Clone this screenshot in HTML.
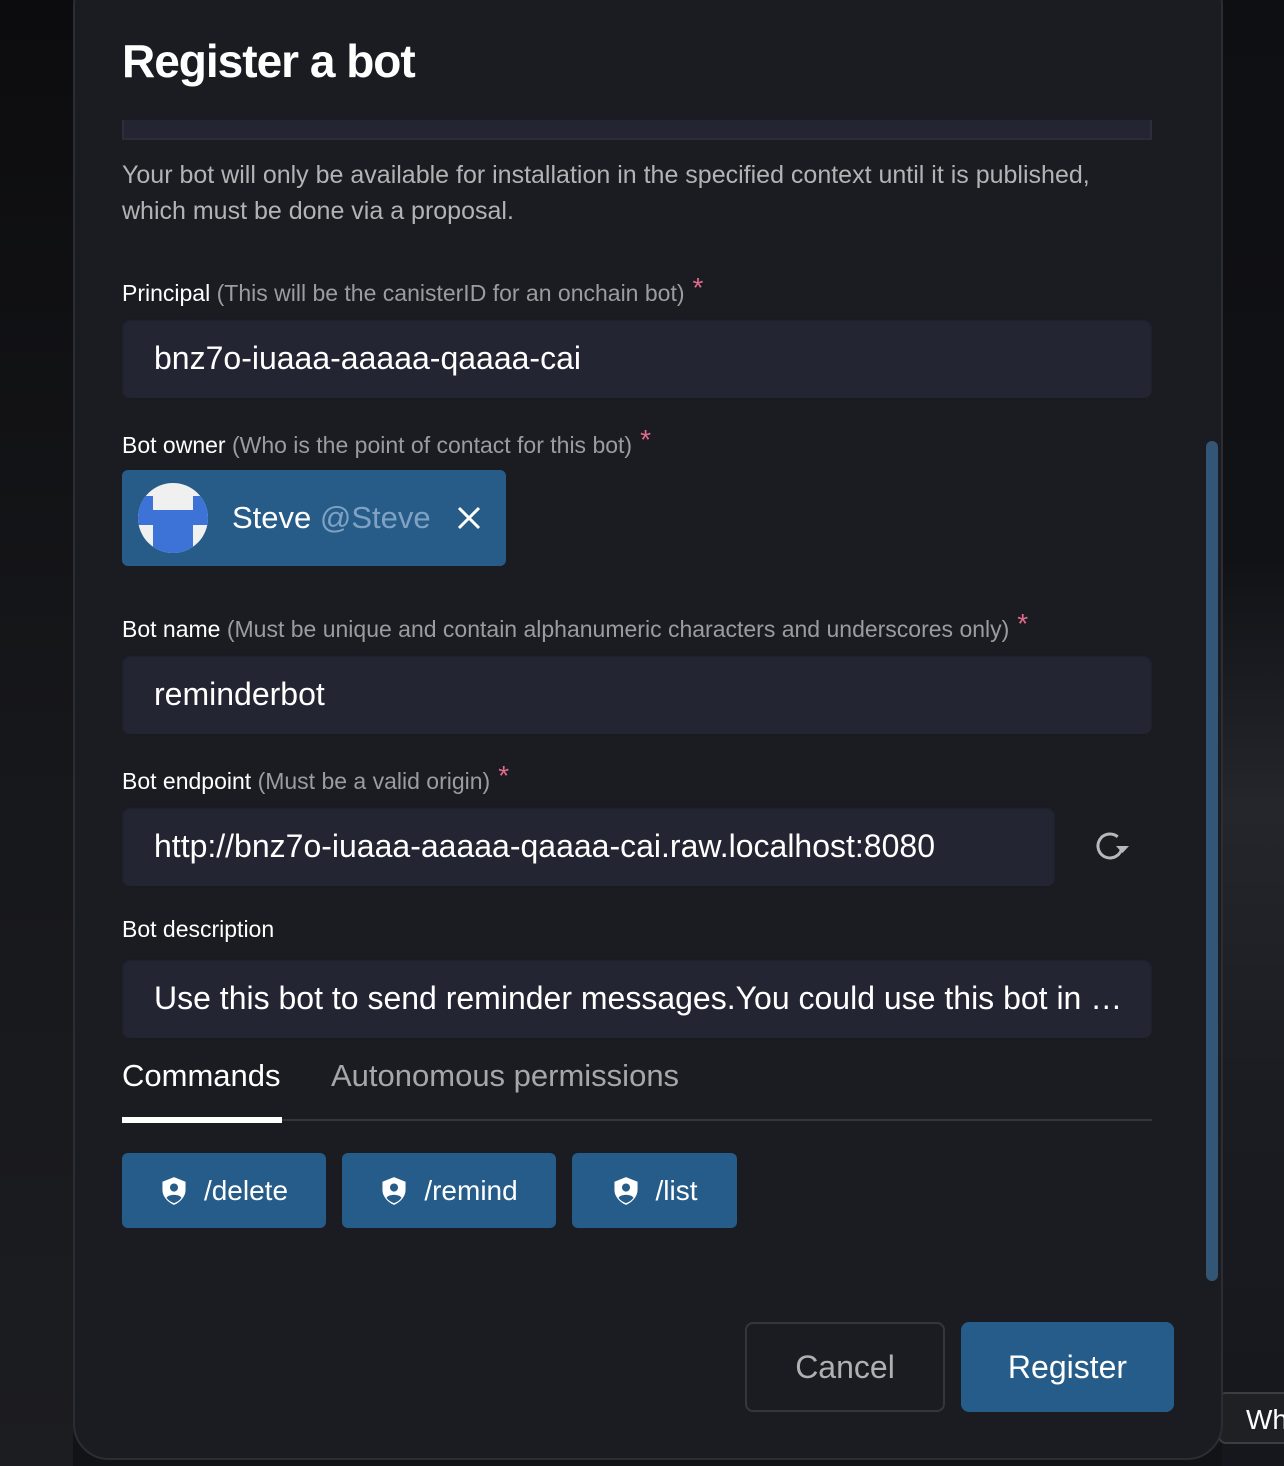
<!DOCTYPE html>
<html><head><meta charset="utf-8"><style>
*{box-sizing:border-box;margin:0;padding:0}
body{width:1284px;height:1466px;overflow:hidden;background:#121316;font-family:"Liberation Sans",sans-serif;position:relative}
.bg{position:absolute;left:1222px;top:0;width:62px;height:1466px;background:linear-gradient(180deg,#0e0f12 0%,#111216 38%,#24262c 55%,#1a1c22 75%,#15171d 100%)}
.bgl{position:absolute;left:0;top:0;width:73px;height:1466px;background:linear-gradient(180deg,#0c0c0e,#16171a 50%,#1c1d21)}
.modal{position:absolute;left:73px;top:-30px;width:1150px;height:1490px;background:#1b1c21;border:2px solid #2c2d33;border-radius:36px}
.a{position:absolute}
.t{color:#fff;font-weight:bold;font-size:46px;letter-spacing:-1px}
.p{color:#b3b3b6;font-size:25px;line-height:36px}
.lbl{font-size:23px;color:#fff}
.lbl span{color:#9b9ca0}
.lbl b{font-weight:normal;color:#e06b8b;font-size:28px;position:relative;top:-4px;margin-left:8px}
.inp{background:#232532;border-radius:8px;color:#fff;font-size:32px;padding-left:32px;display:flex;align-items:center;box-shadow:inset 0 2px 2px rgba(0,0,0,.35)}
.btn{background:#265c89;border-radius:6px;color:#fff;display:flex;align-items:center;justify-content:center;font-size:28px}
</style></head><body>
<div class="bgl"></div><div class="bg"></div>
<div class="a" style="left:1218px;top:1392px;width:80px;height:52px;border:2px solid #3c3d42;border-radius:8px;background:#1f2024;color:#fff;font-size:28px;padding:10px 0 0 26px">Wh</div>
<div class="modal"></div>
<div class="a t" style="left:122px;top:34px">Register a bot</div>
<div class="a" style="left:122px;top:120px;width:1030px;height:20px;background:#232532;border-left:2px solid #2c2e3a;border-right:2px solid #2c2e3a;border-bottom:2px solid #2a2c37"></div>
<div class="a p" style="left:122px;top:157px;width:1000px">Your bot will only be available for installation in the specified context until it is published, which must be done via a proposal.</div>

<div class="a lbl" style="left:122px;top:276px">Principal <span>(This will be the canisterID for an onchain bot)</span><b>*</b></div>
<div class="a inp" style="left:122px;top:318px;width:1030px;height:80px">bnz7o-iuaaa-aaaaa-qaaaa-cai</div>

<div class="a lbl" style="left:122px;top:428px">Bot owner <span>(Who is the point of contact for this bot)</span><b>*</b></div>
<div class="a" style="left:122px;top:470px;width:384px;height:96px;background:#275c88;border-radius:6px"></div>
<div class="a" style="left:138px;top:483px;width:70px;height:70px;border-radius:50%;overflow:hidden;background:#f0f0f0">
 <div class="a" style="left:0;top:13px;width:15px;height:15px;background:#3d72d6"></div>
 <div class="a" style="left:55px;top:13px;width:15px;height:15px;background:#3d72d6"></div>
 <div class="a" style="left:0;top:27px;width:70px;height:15px;background:#3d72d6"></div>
 <div class="a" style="left:15px;top:27px;width:40px;height:43px;background:#3d72d6"></div>
</div>
<div class="a" style="left:232px;top:500px;font-size:31px;color:#fff">Steve <span style="color:#7fa2c4">@Steve</span></div>
<svg class="a" style="left:457px;top:506px" width="24" height="24" viewBox="0 0 24 24"><path d="M2 2L22 22M22 2L2 22" stroke="#fff" stroke-width="3"/></svg>

<div class="a lbl" style="left:122px;top:612px">Bot name <span>(Must be unique and contain alphanumeric characters and underscores only)</span><b>*</b></div>
<div class="a inp" style="left:122px;top:654px;width:1030px;height:80px">reminderbot</div>

<div class="a lbl" style="left:122px;top:764px">Bot endpoint <span>(Must be a valid origin)</span><b>*</b></div>
<div class="a inp" style="left:122px;top:806px;width:933px;height:80px">http://bnz7o-iuaaa-aaaaa-qaaaa-cai.raw.localhost:8080</div>
<svg class="a" style="left:1092px;top:828px" width="40" height="36" viewBox="0 0 40 36"><path d="M25.7 8.8A12 12 0 1 0 29.8 20" fill="none" stroke="#b8b8bb" stroke-width="3"/><path d="M24 18L37 18L30.5 25Z" fill="#b8b8bb"/></svg>

<div class="a lbl" style="left:122px;top:916px">Bot description</div>
<div class="a inp" style="left:122px;top:958px;width:1030px;height:80px">Use this bot to send reminder messages.You could use this bot in …</div>

<div class="a" style="left:122px;top:1058px;font-size:31px;color:#fff">Commands</div>
<div class="a" style="left:331px;top:1058px;font-size:31px;color:#a7a7aa">Autonomous permissions</div>
<div class="a" style="left:122px;top:1119px;width:1030px;height:2px;background:#34353c"></div>
<div class="a" style="left:122px;top:1117px;width:160px;height:6px;background:#fff"></div>

<div class="a btn" style="left:122px;top:1153px;width:204px;height:75px"><svg width="28" height="30" viewBox="0 0 24 26" style="margin-right:16px"><path d="M12 1L22 5V12C22 18 17 23 12 25C7 23 2 18 2 12V5Z" fill="#fff"/><circle cx="12" cy="10" r="3.5" fill="#265c89"/><path d="M5.5 19C7 15.5 17 15.5 18.5 19C16.5 21.5 14 23 12 23.5C10 23 7.5 21.5 5.5 19Z" fill="#265c89"/></svg>/delete</div>
<div class="a btn" style="left:342px;top:1153px;width:214px;height:75px"><svg width="28" height="30" viewBox="0 0 24 26" style="margin-right:16px"><path d="M12 1L22 5V12C22 18 17 23 12 25C7 23 2 18 2 12V5Z" fill="#fff"/><circle cx="12" cy="10" r="3.5" fill="#265c89"/><path d="M5.5 19C7 15.5 17 15.5 18.5 19C16.5 21.5 14 23 12 23.5C10 23 7.5 21.5 5.5 19Z" fill="#265c89"/></svg>/remind</div>
<div class="a btn" style="left:572px;top:1153px;width:165px;height:75px"><svg width="28" height="30" viewBox="0 0 24 26" style="margin-right:16px"><path d="M12 1L22 5V12C22 18 17 23 12 25C7 23 2 18 2 12V5Z" fill="#fff"/><circle cx="12" cy="10" r="3.5" fill="#265c89"/><path d="M5.5 19C7 15.5 17 15.5 18.5 19C16.5 21.5 14 23 12 23.5C10 23 7.5 21.5 5.5 19Z" fill="#265c89"/></svg>/list</div>

<div class="a" style="left:1206px;top:441px;width:12px;height:840px;background:#335677;border-radius:6px"></div>

<div class="a" style="left:745px;top:1322px;width:200px;height:90px;border:2px solid #35363c;border-radius:8px;color:#b0b0b3;font-size:32px;display:flex;align-items:center;justify-content:center">Cancel</div>
<div class="a btn" style="left:961px;top:1322px;width:213px;height:90px;font-size:32px;border-radius:8px">Register</div>
</body></html>
